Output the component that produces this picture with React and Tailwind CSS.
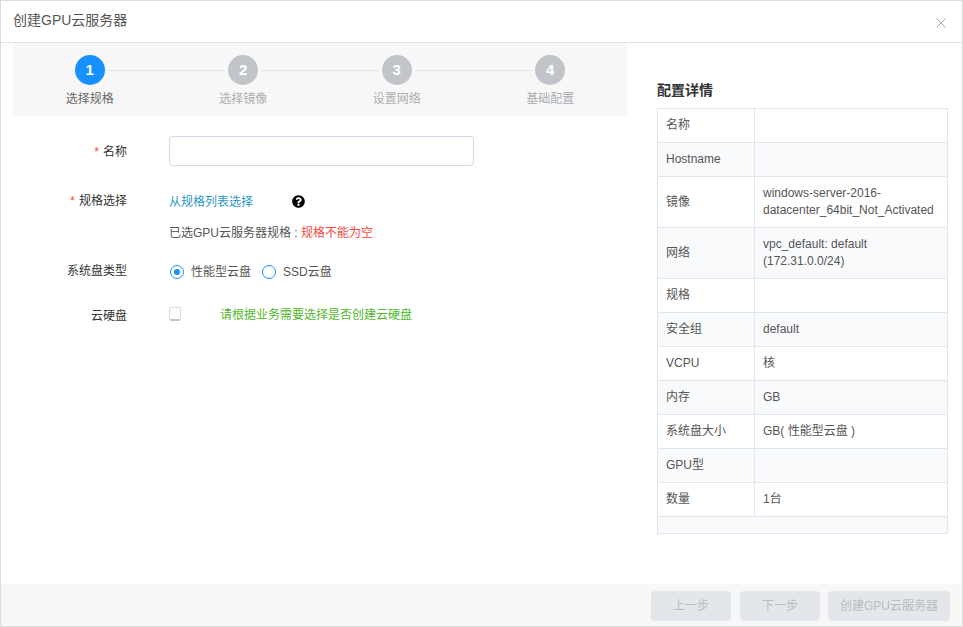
import { FaQuestionCircle } from "react-icons/fa";

const font = { fontFamily: '"Liberation Sans", "Noto Sans CJK SC", sans-serif' };

const steps = ["选择规格", "选择镜像", "设置网络", "基础配置"];

const rows = [
  ["名称", ""],
  ["Hostname", ""],
  ["镜像", "windows-server-2016-datacenter_64bit_Not_Activated"],
  ["网络", "vpc_default: default (172.31.0.0/24)"],
  ["规格", ""],
  ["安全组", "default"],
  ["VCPU", "核"],
  ["内存", "GB"],
  ["系统盘大小", "GB( 性能型云盘 )"],
  ["GPU型", ""],
  ["数量", "1台"],
];

const Label = ({ required, children, className = "" }) => (
  <div className={`w-[114px] shrink-0 text-right text-xs leading-[17px] text-[#333] ${className}`}>
    {required && <span className="mr-1 text-[#f5483b]">*</span>}
    {children}
  </div>
);

const Radio = ({ checked, children }) => (
  <label className="flex items-center gap-[7px]">
    <span className="flex h-[14px] w-[14px] items-center justify-center rounded-full border border-[#1890ff] bg-white">
      {checked && <span className="h-[6px] w-[6px] rounded-full bg-[#1890ff]" />}
    </span>
    <span>{children}</span>
  </label>
);

const App = () => {
  return (
    <div style={font} className="flex h-[627px] w-full flex-col border border-[#dcdcdc] bg-white text-xs text-[#555]">
      <div className="flex h-[42px] shrink-0 items-center justify-between border-b border-[#dfe1e8] pl-3 pr-[16px]">
        <h1 className="mb-[3px] text-sm text-[#555]">创建GPU云服务器</h1>
        <svg width="10" height="10" viewBox="0 0 10 10" className="mt-[2px] text-[#a9a9a9]">
          <path d="M0.5 0.5L9.5 9.5M9.5 0.5L0.5 9.5" stroke="currentColor" fill="none" />
        </svg>
      </div>

      <div className="flex min-h-0 flex-1">
        <div className="w-[626px] shrink-0 pl-3">
          <div className="grid h-[73px] w-[614px] grid-cols-4 bg-[#f7f7f7] pt-3">
            {steps.map((step, i) => (
              <div key={step} className="flex flex-col items-center">
                <div className="flex w-full items-center">
                  <div className={`mr-[3px] h-px flex-1 ${i > 0 ? "bg-[#dfe4ec]" : ""}`} />
                  <div
                    className={`flex h-[30px] w-[30px] items-center justify-center rounded-full text-[15px] font-bold text-white ${
                      i === 0 ? "bg-[#1890ff]" : "bg-[#c1c4c8]"
                    }`}
                  >
                    {i + 1}
                  </div>
                  <div className={`ml-[3px] h-px flex-1 ${i < 3 ? "bg-[#dfe4ec]" : ""}`} />
                </div>
                <div className={`mt-[6px] text-xs leading-[17px] ${i === 0 ? "text-[#666]" : "text-[#aaadb2]"}`}>
                  {step}
                </div>
              </div>
            ))}
          </div>

          <div className="mt-5 flex items-center">
            <Label required className="pt-[2px]">名称</Label>
            <input className="ml-[42px] h-[30px] w-[305px] rounded border border-[#cfd9e8] bg-white" />
          </div>

          <div className="mt-[25px] flex items-center">
            <Label required className="pt-[2px]">规格选择</Label>
            <a className="ml-[42px] w-[123px] pt-[2px] text-[#2a96c9]">从规格列表选择</a>
            <FaQuestionCircle className="mt-[2px] text-[13px] text-black" />
          </div>

          <div className="ml-[156px] mt-[15px] leading-[17px]">
            已选GPU云服务器规格 : <span className="text-[#f5483b]">规格不能为空</span>
          </div>

          <div className="mt-[21px] flex items-center">
            <Label>系统盘类型</Label>
            <div className="ml-[43px] flex items-center gap-[11px]">
              <Radio checked>性能型云盘</Radio>
              <Radio>SSD云盘</Radio>
            </div>
          </div>

          <div className="mt-[24px] flex items-center">
            <Label className="pt-[4px]">云硬盘</Label>
            <span className="mb-[2px] ml-[42px] h-[14px] w-[12px] rounded-[2px] border border-[#d5dce6] border-b-2 border-b-[#c4c4c4] bg-white" />
            <span className="ml-[39px] text-[#52b82a]">请根据业务需要选择是否创建云硬盘</span>
          </div>
        </div>

        <div className="pl-[30px] pt-[38px]">
          <h2 className="text-sm font-bold leading-[18px] text-[#333]">配置详情</h2>
          <table className="mt-[9px] w-[291px] table-fixed border-collapse border border-[#e0e5ee]">
            <tbody>
              {rows.map(([name, value], i) => (
                <tr key={name} className={i % 2 === 1 ? "bg-[#f9fafc]" : ""}>
                  <td className="h-[34px] w-[97px] border border-[#e0e5ee] px-2 leading-[17px]">{name}</td>
                  <td className="break-words border border-[#e0e5ee] px-2 py-2 leading-[17px]">{value}</td>
                </tr>
              ))}
              <tr className="bg-[#f9fafc]">
                <td colSpan={2} className="h-[17px] border border-[#e0e5ee]" />
              </tr>
            </tbody>
          </table>
        </div>
      </div>

      <div className="flex h-[42px] shrink-0 items-center justify-end bg-[#f7f7f7] pr-3 pt-[1px]">
        <button className="h-[30px] w-[80px] rounded-sm bg-[#e3e6ea] text-[#b9bcc1]">上一步</button>
        <button className="ml-[9px] h-[30px] w-[80px] rounded-sm bg-[#e3e6ea] text-[#b9bcc1]">下一步</button>
        <button className="ml-[8px] h-[30px] w-[122px] rounded-sm bg-[#e3e6ea] text-[#b9bcc1]">创建GPU云服务器</button>
      </div>
    </div>
  );
};

export default App;
